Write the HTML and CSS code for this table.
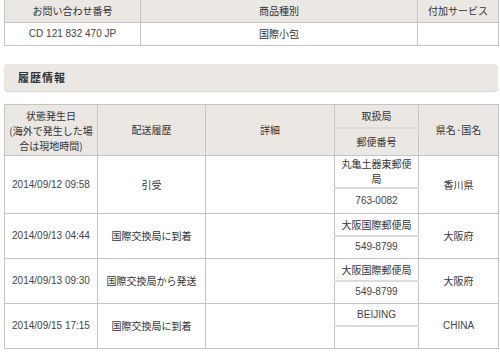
FILE: index.html
```html
<!DOCTYPE html>
<html lang="ja">
<head>
<meta charset="utf-8">
<link rel="stylesheet" href="styles.css">
</head>
<body>
<div class="page">
  <table class="summary">
    <colgroup><col class="c1"><col class="c2"><col class="c3"></colgroup>
    <tr class="head"><th>お問い合わせ番号</th><th>商品種別</th><th>付加サービス</th></tr>
    <tr class="data"><td class="num">CD 121 832 470 JP</td><td>国際小包</td><td></td></tr>
  </table>

  <div class="section-title">履歴情報</div>

  <table class="history">
    <colgroup><col class="h1"><col class="h2"><col class="h3"><col class="h4"><col class="h5"></colgroup>
    <tr class="hr1">
      <th rowspan="2" class="multi">状態発生日<br>(海外で発生した場<br>合は現地時間)</th>
      <th rowspan="2">配送履歴</th>
      <th rowspan="2">詳細</th>
      <th class="sub">取扱局</th>
      <th rowspan="2">県名·国名</th>
    </tr>
    <tr class="hr2"><th>郵便番号</th></tr>

    <tr class="r1a">
      <td rowspan="2" class="num">2014/09/12 09:58</td>
      <td rowspan="2">引受</td>
      <td rowspan="2"></td>
      <td class="office">丸亀土器東郵便<br>局</td>
      <td rowspan="2">香川県</td>
    </tr>
    <tr class="r1b"><td class="num">763-0082</td></tr>

    <tr class="ra">
      <td rowspan="2" class="num">2014/09/13 04:44</td>
      <td rowspan="2">国際交換局に到着</td>
      <td rowspan="2"></td>
      <td class="office">大阪国際郵便局</td>
      <td rowspan="2">大阪府</td>
    </tr>
    <tr class="rb"><td class="num">549-8799</td></tr>

    <tr class="ra">
      <td rowspan="2" class="num">2014/09/13 09:30</td>
      <td rowspan="2">国際交換局から発送</td>
      <td rowspan="2"></td>
      <td class="office">大阪国際郵便局</td>
      <td rowspan="2">大阪府</td>
    </tr>
    <tr class="rb"><td class="num">549-8799</td></tr>

    <tr class="ra">
      <td rowspan="2" class="num">2014/09/15 17:15</td>
      <td rowspan="2">国際交換局に到着</td>
      <td rowspan="2"></td>
      <td class="office num">BEIJING</td>
      <td rowspan="2" class="num">CHINA</td>
    </tr>
    <tr class="rb"><td></td></tr>
  </table>
</div>
</body>
</html>
```

FILE: styles.css
```css
html, body {
  margin: 0;
  padding: 0;
  background: #ffffff;
}
body {
  font-family: "Noto Sans CJK JP", "Liberation Sans", sans-serif;
  font-size: 10px;
  color: #333333;
}
.page {
  padding: 0 2px 0 4px;
}
table {
  border-collapse: collapse;
  width: 494px;
  table-layout: fixed;
}
th, td {
  border: 1px solid #c4c4c4;
  padding: 0;
  text-align: center;
  vertical-align: middle;
  font-weight: normal;
  line-height: 14px;
}
th {
  background: #ebe7e3;
}
.num {
  font-family: "Liberation Sans", sans-serif;
  font-size: 10px;
  color: #444444;
}
.summary {
  margin-top: -1px;
}
.summary .c1 { width: 136px; }
.summary .c2 { width: 277px; }
.summary .c3 { width: 81px; }
.summary .head { height: 23px; }
.summary .data { height: 23px; }

.section-title {
  margin-top: 18px;
  height: 27px;
  background: #ebe7e3;
  border-radius: 4px;
  box-shadow: 0 1px 1px #d6d2ce;
  font-weight: bold;
  font-size: 11px;
  line-height: 27px;
  padding-left: 14px;
  color: #333333;
  letter-spacing: 1px;
}

.history {
  margin-top: 13px;
}
.history .h1 { width: 93px; }
.history .h2 { width: 108px; }
.history .h3 { width: 129px; }
.history .h4 { width: 84px; }
.history .h5 { width: 80px; }
.history th.multi {
  line-height: 15px;
}
.history .sub, .history .office {
  border-bottom: 2px solid #dcdcdc;
}
.hr1 { height: 23px; }
.hr2 { height: 28px; }
.r1a { height: 32px; }
.r1b { height: 26px; }
.ra { height: 22px; }
.rb { height: 23px; }
.office {
  line-height: 15px;
}
```
